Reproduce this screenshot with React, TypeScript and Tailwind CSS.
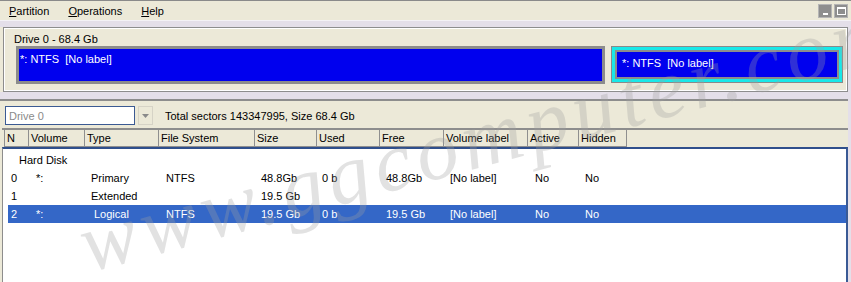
import React from "react";

type Row = {
  n: string;
  vol?: string;
  type?: string;
  typePad?: boolean;
  fs?: string;
  size?: string;
  used?: string;
  free?: string;
  label?: string;
  active?: string;
  hidden?: string;
  selected?: boolean;
};

const rows: Row[] = [
  { n: "0", vol: "*:", type: "Primary", fs: "NTFS", size: "48.8Gb", used: "0 b", free: "48.8Gb", label: "[No label]", active: "No", hidden: "No" },
  { n: "1", type: "Extended", size: "19.5 Gb" },
  { n: "2", vol: "*:", type: "Logical", typePad: true, fs: "NTFS", size: "19.5 Gb", used: "0 b", free: "19.5 Gb", label: "[No label]", active: "No", hidden: "No", selected: true },
];

const headers: { t: string; w: string }[] = [
  { t: "N", w: "w-[25px]" },
  { t: "Volume", w: "w-[56px]" },
  { t: "Type", w: "w-[74px]" },
  { t: "File System", w: "w-[96px]" },
  { t: "Size", w: "w-[62px]" },
  { t: "Used", w: "w-[63px]" },
  { t: "Free", w: "w-[64px]" },
  { t: "Volume label", w: "w-[84px]" },
  { t: "Active", w: "w-[51px]" },
  { t: "Hidden", w: "w-[48px]" },
];

function Cell({ w, pl, children }: { w: string; pl: string; children?: React.ReactNode }) {
  return <div className={`${w} ${pl} shrink-0 whitespace-nowrap`}>{children}</div>;
}

export default function App() {
  return (
    <div className="relative w-[851px] h-[282px] overflow-hidden bg-[#e4dfe9] font-['Liberation_Sans',Arial,sans-serif] text-[11px] leading-[12px] text-black">
      {/* Menu bar */}
      <div className="h-[20px] bg-[#ece9d8] border-t border-[#8a8a8a] flex items-center pl-[9px] pr-[3px] gap-[19px]">
        <span><u>P</u>artition</span>
        <span><u>O</u>perations</span>
        <span><u>H</u>elp</span>
        <div className="ml-auto flex gap-[2px] self-start mt-[3px]">
          <div className="w-[14px] h-[14px] bg-[#8e8e8e] border border-[#b5b5b5] flex items-end justify-center pb-[2px]">
            <div className="w-[5px] h-[2px] bg-white" />
          </div>
          <div className="w-[14px] h-[14px] bg-[#8e8e8e] border border-[#b5b5b5] flex items-center justify-center">
            <div className="w-[9px] h-[8px] border border-white border-t-2" />
          </div>
        </div>
      </div>

      {/* strip */}
      <div className="h-[7px] bg-[#e4dfe9] border-t border-[#f4f2f6]" />

      {/* Disk map group */}
      <div className="flex h-[65px]">
        <div className="w-[3px] bg-[#ece9d8]" />
        <div className="flex-1 border border-[#8d8d8d]">
          <div className="h-full border border-white bg-[#ece9d8] pl-[9px] pt-[4px]">
            <div>Drive 0 - 68.4 Gb</div>
            <div className="flex mt-[1px] ml-[2px]">
              <div className="w-[589px] h-[38px] border-[3px] border-[#8c8c8c] bg-[#0000ee] text-white pl-[1px] pt-[4px]">
                *:&nbsp;NTFS&nbsp;&nbsp;[No label]
              </div>
              <div className="ml-[6px] w-[232px] h-[37px] border border-[#8a8a8a]">
                <div className="h-full border-[3px] border-[#19e8e8]">
                  <div className="h-full border-[2px] border-[#8c8c8c] bg-[#0000ee] text-white pl-[5px] pt-[5px]">
                    *:&nbsp;NTFS&nbsp;&nbsp;[No label]
                  </div>
                </div>
              </div>
            </div>
          </div>
        </div>
        <div className="w-[3px]" />
      </div>

      {/* strip */}
      <div className="h-[7px] bg-[#e4dfe9]" />

      {/* Lower section */}
      <div className="flex h-[183px]">
        <div className="w-[2px] bg-[#ece9d8] border-t-2 border-[#8d8d8d]" />
        <div className="flex-1 flex flex-col bg-[#ece9d8] border-t-2 border-[#8d8d8d]">
          {/* toolbar */}
          <div className="flex items-center pt-[5px] pl-[3px] h-[24px]">
            <div className="w-[130px] h-[19px] border border-[#3b5a93] bg-white text-[#8a8a8a] flex items-center pl-[3px]">
              Drive 0
            </div>
            <div className="ml-[3px] w-[15px] h-[19px] border border-[#d6d3c6] bg-[#ece9d8] flex items-center justify-center">
              <svg width="7" height="4" viewBox="0 0 7 4">
                <path d="M0 0 L7 0 L3.5 4 Z" fill="#8a8a8a" />
              </svg>
            </div>
            <div className="ml-[12px]">Total sectors 143347995, Size 68.4 Gb</div>
          </div>
          {/* header */}
          <div className="mt-[3px] border-t-2 border-[#8d8d8d] flex pl-[2px] h-[19px]">
            {headers.map((h, i) => (
              <div
                key={h.t}
                className={`${h.w} shrink-0 h-[17px] border-r border-b border-[#8f8f8f] ${i === 0 ? "border-l" : ""} flex items-center pl-[2px] whitespace-nowrap`}
              >
                {h.t}
              </div>
            ))}
          </div>
          {/* list */}
          <div className="flex-1 bg-white border-t-2 border-[#2f4f8c] border-l border-l-[#8d8d8d] border-r-2 border-r-[#3a5a95] pt-[2px]">
            <div className="h-[18px] flex items-center pl-[16px]">Hard Disk</div>
            {rows.map((r) => (
              <div
                key={r.n}
                className={`ml-[5px] h-[18px] flex items-center ${r.selected ? "bg-[#3467c7] text-white" : ""}`}
              >
                <Cell w="w-[21px]" pl="pl-[3px]">{r.n}</Cell>
                <Cell w="w-[56px]" pl="pl-[7px]">{r.vol}</Cell>
                <Cell w="w-[74px]" pl={r.typePad ? "pl-[9px]" : "pl-[6px]"}>{r.type}</Cell>
                <Cell w="w-[96px]" pl="pl-[7px]">{r.fs}</Cell>
                <Cell w="w-[62px]" pl="pl-[6px]">{r.size}</Cell>
                <Cell w="w-[63px]" pl="pl-[5px]">{r.used}</Cell>
                <Cell w="w-[64px]" pl="pl-[6px]">{r.free}</Cell>
                <Cell w="w-[84px]" pl="pl-[6px]">{r.label}</Cell>
                <Cell w="w-[51px]" pl="pl-[7px]">{r.active}</Cell>
                <Cell w="w-[48px]" pl="pl-[6px]">{r.hidden}</Cell>
              </div>
            ))}
          </div>
        </div>
        <div className="w-[3px]" />
      </div>

      {/* watermark */}
      <div className="pointer-events-none absolute left-[92px] top-[202px] origin-bottom-left -rotate-[15deg] whitespace-nowrap font-['Liberation_Serif',serif] italic text-[84px] leading-[84px] tracking-[6px] text-[#a0a0a0] opacity-30">
        www.ggcomputer.com
      </div>
    </div>
  );
}
